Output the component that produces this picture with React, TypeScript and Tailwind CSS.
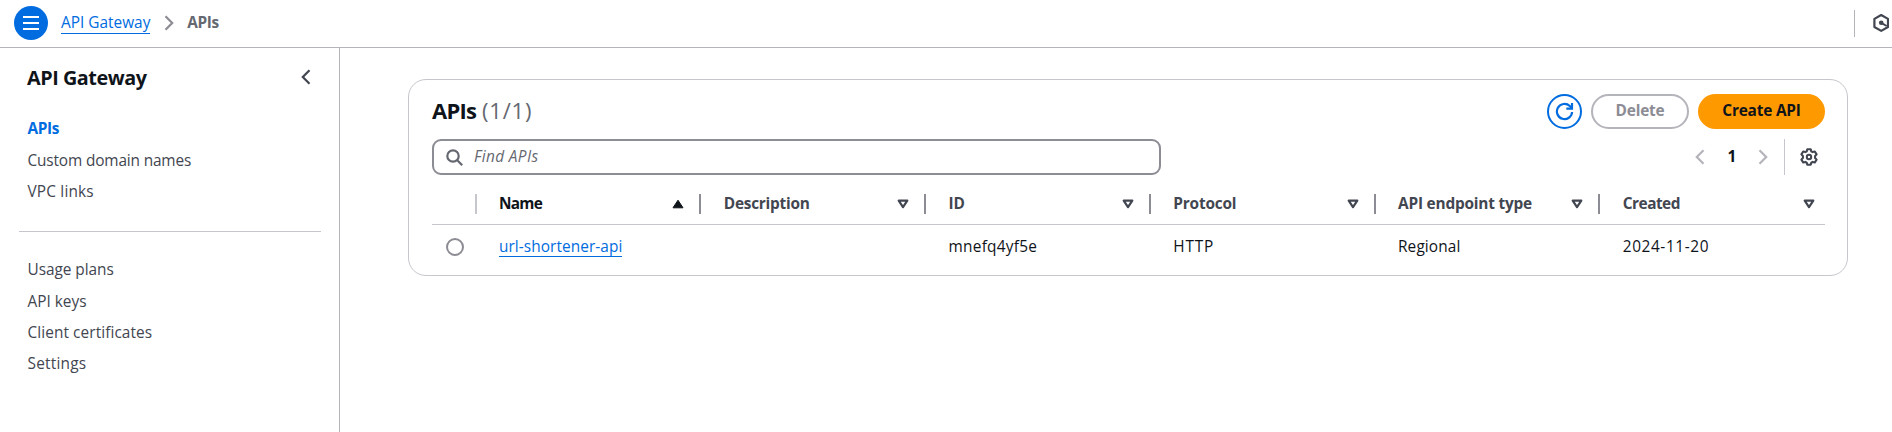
import React from "react";
import clsx from "clsx";

type NavItem = { label: string; spacing: string };

const primaryNav: NavItem[] = [
  { label: "Custom domain names", spacing: "tracking-[-0.15px]" },
  { label: "VPC links", spacing: "tracking-[0.18px]" },
];

const secondaryNav: NavItem[] = [
  { label: "Usage plans", spacing: "tracking-[-0.05px]" },
  { label: "API keys", spacing: "tracking-normal" },
  { label: "Client certificates", spacing: "tracking-[0.08px]" },
  { label: "Settings", spacing: "tracking-[0.22px]" },
];

const columns = [
  { label: "Name", spacing: "tracking-[-0.75px]", sorted: true },
  { label: "Description", spacing: "tracking-[-0.24px]" },
  { label: "ID", spacing: "tracking-normal" },
  { label: "Protocol", spacing: "tracking-[-0.18px]" },
  { label: "API endpoint type", spacing: "tracking-[-0.2px]" },
  { label: "Created", spacing: "tracking-[-0.5px]" },
];

const cells = [
  { value: "", spacing: "" },
  { value: "mnefq4yf5e", spacing: "tracking-[0.27px]" },
  { value: "HTTP", spacing: "tracking-[0.8px]" },
  { value: "Regional", spacing: "tracking-[0.12px]" },
  { value: "2024-11-20", spacing: "tracking-[0.6px]" },
];

function Chevron({ dir, className }: { dir: "left" | "right"; className?: string }) {
  return (
    <svg width="10" height="16" viewBox="0 0 10 16" fill="none" stroke="currentColor" strokeWidth="2.2" className={className}>
      <path d={dir === "left" ? "M8.5 1.2 1.8 8l6.7 6.8" : "M1.5 1.2 8.2 8l-6.7 6.8"} />
    </svg>
  );
}

function SortIcon({ sorted }: { sorted?: boolean }) {
  return sorted ? (
    <svg width="12" height="10" viewBox="0 0 12 10" className="text-[#0f141a]">
      <path d="M6 1.2 11 8.8H1Z" fill="currentColor" stroke="currentColor" strokeWidth="1" strokeLinejoin="round" />
    </svg>
  ) : (
    <svg width="12" height="10" viewBox="0 0 12 10" className="text-[#424650]">
      <path d="M1.7 1.7h8.6L6 8.2Z" fill="none" stroke="currentColor" strokeWidth="2.2" strokeLinejoin="round" />
    </svg>
  );
}

function NavList({ items }: { items: NavItem[] }) {
  return (
    <>
      {items.map((item) => (
        <li key={item.label} className={clsx("h-[31.4px] whitespace-nowrap", item.spacing)}>
          {item.label}
        </li>
      ))}
    </>
  );
}

export default function App() {
  return (
    <div className="flex h-[432px] w-full flex-col overflow-hidden bg-white font-['Open_Sans','Noto_Sans',sans-serif] text-[15.4px] leading-[22px] text-[#0f141a]">
      <header className="flex h-12 shrink-0 items-center justify-between border-b border-[#b4b4bb] pb-px pl-3.5">
        <div className="flex items-center">
          <button className="flex h-[34px] w-[34px] items-center justify-center rounded-full bg-[#006ce0] text-white">
            <svg width="16" height="16" viewBox="0 0 16 16" fill="none" stroke="currentColor" strokeWidth="2">
              <path d="M0 2h16M0 8h16M0 14h16" />
            </svg>
          </button>
          <a className="ml-[13px] h-[21px] border-b border-[#006ce0] leading-[20px] text-[#006ce0]">API Gateway</a>
          <Chevron dir="right" className="ml-[14px] text-[#8c8c94]" />
          <span className="ml-[13px] -mt-px font-bold tracking-[-0.45px] text-[#656871]">APIs</span>
        </div>
        <div className="flex items-center gap-[18px] pr-[3px]">
          <div className="h-[27px] w-px bg-[#b4b4bb]" />
          <svg width="16" height="20" viewBox="0 0 16 20" fill="none" className="text-[#424650]">
            <path d="M8.2 2 15 5.9v8.1L8.2 17.9 1.4 14V5.9Z" stroke="currentColor" strokeWidth="2.2" strokeLinejoin="round" />
            <circle cx="8.2" cy="9.8" r="2.3" fill="currentColor" />
            <path d="m8.2 9.8 5.5 3.2" stroke="currentColor" strokeWidth="2" />
          </svg>
        </div>
      </header>

      <div className="flex min-h-0 flex-1">
        <nav className="w-[340px] shrink-0 border-r border-[#b4b4bb] pt-[18px] text-[#424650]">
          <div className="flex h-6 items-start justify-between pr-[28px] pl-[27px]">
            <h2 className="text-[19.8px] leading-6 font-bold tracking-[-0.45px] text-[#0f141a]">API Gateway</h2>
            <Chevron dir="left" className="mt-[3px]" />
          </div>
          <ul className="mt-7 pl-[27.5px]">
            <li className="h-8 font-bold tracking-[-0.35px] text-[#006ce0]">APIs</li>
            <NavList items={primaryNav} />
          </ul>
          <hr className="mt-[18.4px] mr-[18px] ml-[19px] border-[#c6c6cd]" />
          <ul className="mt-[27px] pl-[27.5px]">
            <NavList items={secondaryNav} />
          </ul>
        </nav>

        <main className="flex-1 pt-[31px] pr-[44px] pl-[68px]">
          <section className="h-[197px] rounded-[18px] border border-[#c6c6cd] pt-3.5 pr-[22px] pl-[23px]">
            <div className="flex h-[35px] items-center justify-between">
              <h1 className="-mt-1 flex gap-[6px] text-[22px] leading-[28px] font-bold tracking-[-0.8px]">
                APIs <span className="font-normal tracking-[0.8px] text-[#656871]">(1/1)</span>
              </h1>
              <div className="flex items-center gap-[9px]">
                <button className="flex h-[35px] w-[35px] items-center justify-center rounded-full border-2 border-[#006ce0] text-[#006ce0]">
                  <svg width="19" height="19" viewBox="0 0 20 20" fill="none" stroke="currentColor" strokeWidth="2.3">
                    <path d="M18 10.5a8 8 0 1 1-2.4-6.2L17.8 6.6" />
                    <path d="M17.9 1v6h-6" />
                  </svg>
                </button>
                <button className="h-[35px] w-[98px] rounded-full border-2 border-[#b4b4bb] pb-0.5 font-bold tracking-[-0.2px] text-[#8c8c94]">Delete</button>
                <button className="h-[35px] w-[127px] rounded-full bg-[#ff9900] pb-0.5 font-bold tracking-[-0.2px] whitespace-nowrap">Create API</button>
              </div>
            </div>

            <div className="mt-[10px] flex h-9 items-center justify-between">
              <div className="flex h-9 w-[729px] items-center rounded-[9px] border-2 border-[#8c8c94] pl-3 text-[#656871]">
                <svg width="17" height="17" viewBox="0 0 17 17" fill="none" stroke="currentColor" strokeWidth="2.2">
                  <circle cx="7" cy="7" r="5.7" />
                  <path d="m11 11 5.2 5.2" />
                </svg>
                <span className="ml-[11px] -mt-px tracking-[0.37px] italic">Find APIs</span>
              </div>
              <div className="flex h-9 items-center">
                <Chevron dir="left" className="text-[#b4b4bb]" />
                <span className="-mt-px w-[54px] text-center font-bold">1</span>
                <Chevron dir="right" className="-ml-px text-[#b4b4bb]" />
                <div className="ml-4 h-9 w-px bg-[#c6c6cd]" />
                <svg width="18" height="18" viewBox="0 0 18 18" fill="none" stroke="currentColor" className="mr-[7px] ml-[15px] text-[#424650]">
                  <path d="M7.3 1.2h3.4l.6 2.2 1.3.7 2.2-.6 1.8 2.9-1.5 1.6v2l1.5 1.6-1.8 2.9-2.2-.6-1.3.7-.6 2.2H7.3l-.6-2.2-1.3-.7-2.2.6-1.8-2.9L2.9 10V8L1.4 6.4l1.8-2.9 2.2.6 1.3-.7Z" strokeWidth="2.1" strokeLinejoin="round" />
                  <circle cx="9" cy="9" r="2.2" strokeWidth="2" />
                </svg>
              </div>
            </div>

            <div className="mt-[9px] grid h-[41px] grid-cols-[44.5px_repeat(6,minmax(0,1fr))] border-b border-[#c6c6cd]">
              <div className="mt-2.5 h-5 border-r-2 border-[#c6c6cd]" />
              {columns.map((col, i) => (
                <div
                  key={col.label}
                  className={clsx(
                    "mt-2.5 flex h-5 items-center justify-between pl-[22.5px] font-bold",
                    i === columns.length - 1 ? "pr-[10px]" : "border-r-2 border-[#8c8c94] pr-[15px]",
                    col.sorted ? "text-[#0f141a]" : "text-[#424650]",
                  )}
                >
                  <span className={clsx("whitespace-nowrap", col.spacing)}>{col.label}</span>
                  <SortIcon sorted={col.sorted} />
                </div>
              ))}
            </div>
            <div className="grid h-[43px] grid-cols-[44.5px_repeat(6,minmax(0,1fr))] items-center">
              <div className="pl-3.5">
                <div className="h-[18px] w-[18px] rounded-full border-2 border-[#8c8c94]" />
              </div>
              <div className="flex pl-[22.5px]">
                <a className="h-[21px] border-b border-[#006ce0] leading-[22px] tracking-[0.07px] whitespace-nowrap text-[#006ce0]">url-shortener-api</a>
              </div>
              {cells.map((cell, i) => (
                <div key={i} className={clsx("pl-[22.5px] whitespace-nowrap", cell.spacing)}>
                  {cell.value}
                </div>
              ))}
            </div>
          </section>
        </main>
      </div>
    </div>
  );
}
